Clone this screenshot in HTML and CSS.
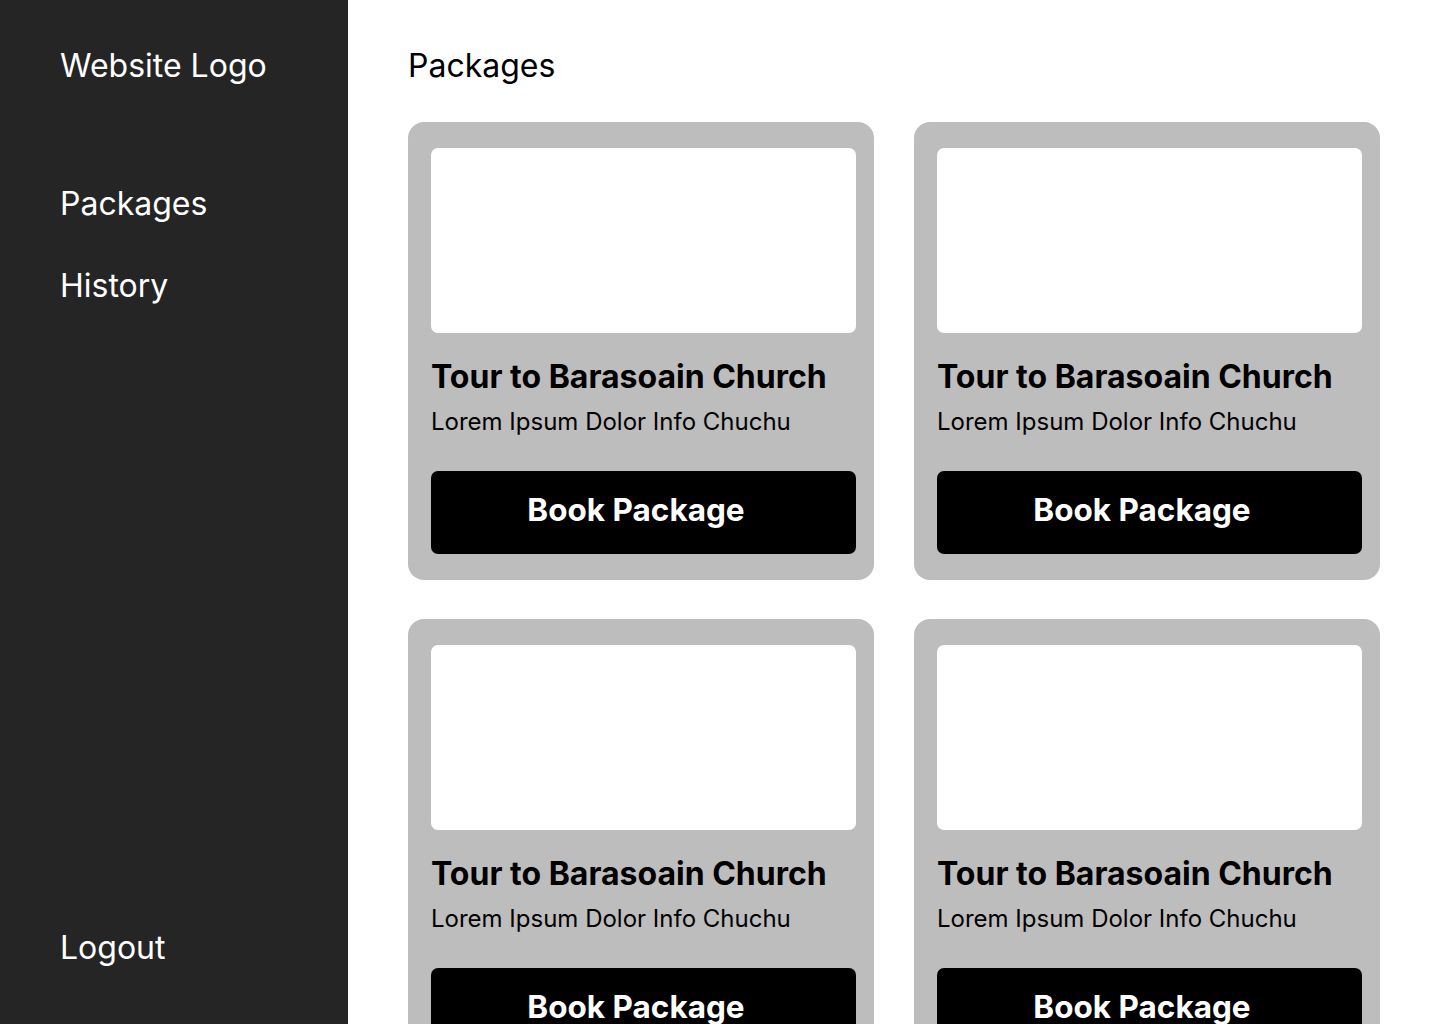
FILE: index.html
```html
<!DOCTYPE html>
<html lang="en">
<head>
<meta charset="utf-8">
<title>Packages</title>
<link rel="stylesheet" href="styles.css">
</head>
<body>
<div class="app">
  <aside class="sidebar">
    <div class="logo">Website Logo</div>
    <nav class="nav">
      <a class="nav-item" href="#">Packages</a>
      <a class="nav-item" href="#">History</a>
    </nav>
    <a class="logout" href="#">Logout</a>
  </aside>
  <main class="main">
    <h1 class="page-title">Packages</h1>
    <div class="grid">
      <div class="card">
        <div class="card-image"></div>
        <h2 class="card-title">Tour to Barasoain Church</h2>
        <p class="card-desc">Lorem Ipsum Dolor Info Chuchu</p>
        <button class="card-btn">Book Package</button>
      </div>
      <div class="card">
        <div class="card-image"></div>
        <h2 class="card-title">Tour to Barasoain Church</h2>
        <p class="card-desc">Lorem Ipsum Dolor Info Chuchu</p>
        <button class="card-btn">Book Package</button>
      </div>
      <div class="card">
        <div class="card-image"></div>
        <h2 class="card-title">Tour to Barasoain Church</h2>
        <p class="card-desc">Lorem Ipsum Dolor Info Chuchu</p>
        <button class="card-btn">Book Package</button>
      </div>
      <div class="card">
        <div class="card-image"></div>
        <h2 class="card-title">Tour to Barasoain Church</h2>
        <p class="card-desc">Lorem Ipsum Dolor Info Chuchu</p>
        <button class="card-btn">Book Package</button>
      </div>
    </div>
  </main>
</div>
</body>
</html>
```
FILE: styles.css
```css
* { box-sizing: border-box; }
html, body {
  margin: 0;
  padding: 0;
  height: 1024px;
  overflow: hidden;
  background: #ffffff;
  font-family: Inter, "Noto Sans", sans-serif;
}
.app {
  display: flex;
  height: 1024px;
}
.sidebar {
  width: 348px;
  flex: 0 0 348px;
  background: #252525;
  color: #ffffff;
  display: flex;
  flex-direction: column;
  padding: 46px 0 57px 60px;
}
.logo {
  font-size: 32px;
  line-height: 39px;
}
.nav {
  display: flex;
  flex-direction: column;
  gap: 43px;
  margin-top: 99px;
}
.nav-item, .logout {
  color: #ffffff;
  text-decoration: none;
  font-size: 32px;
  line-height: 39px;
}
.logout { margin-top: auto; }
.main {
  flex: 1;
  padding: 46px 60px 0 60px;
  overflow: hidden;
}
.page-title {
  margin: 0 0 37px 0;
  font-size: 32px;
  line-height: 39px;
  font-weight: 400;
  color: #000;
}
.grid {
  display: grid;
  grid-template-columns: 1fr 1fr;
  column-gap: 40px;
  row-gap: 39px;
}
.card {
  background: #bdbdbd;
  border-radius: 16px;
  padding: 26px 18px 26px 23px;
  display: flex;
  flex-direction: column;
}
.card-image {
  height: 185px;
  background: #ffffff;
  border-radius: 7px;
}
.card-title {
  margin: 24px 0 0 0;
  font-size: 32px;
  line-height: 39px;
  font-weight: 700;
  color: #000;
}
.card-desc {
  margin: 11px 0 0 0;
  font-size: 24px;
  line-height: 29px;
  color: #000;
}
.card-btn {
  margin-top: 35px;
  height: 83px;
  border: 0;
  border-radius: 7px;
  background: #000;
  color: #fff;
  font-family: Inter, "Noto Sans", sans-serif;
  font-size: 31.5px;
  font-weight: 700;
  display: flex;
  align-items: center;
  justify-content: center;
  padding: 0 15px 6px 0;
  cursor: pointer;
}
```
